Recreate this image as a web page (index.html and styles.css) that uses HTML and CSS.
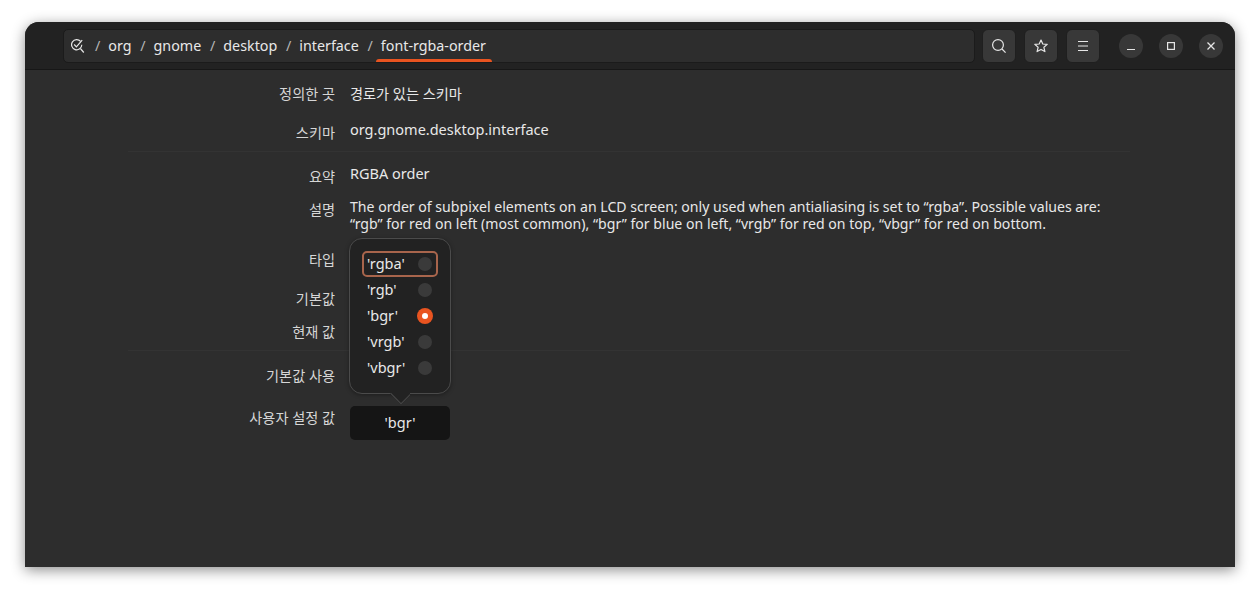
FILE: index.html
```html
<!DOCTYPE html>
<html lang="ko">
<head>
    <meta charset="utf-8" />
    <title>font-rgba-order</title>
    <link rel="stylesheet" href="styles.css">
</head>
<body>
    <div class="window">
        <header class="headerbar">
            <div class="pathbar">
                <svg class="path-icon" width="16" height="16" viewBox="0 0 16 16" fill="none" stroke="#e6e6e6" stroke-width="1.2">
                    <path d="M9.6 3.4A5.1 5.1 0 1 0 10.8 6.8"/>
                    <path d="M3.2 6.5l2.2 2.4 5.8-6.8"/>
                    <path d="M9.4 10.5l3.4 4"/>
                </svg>
                <span class="sep">/</span><span class="crumb">org</span>
                <span class="sep">/</span><span class="crumb">gnome</span>
                <span class="sep">/</span><span class="crumb">desktop</span>
                <span class="sep">/</span><span class="crumb">interface</span>
                <span class="sep">/</span><span class="crumb current">font-rgba-order</span>
            </div>
            <button class="toolbtn">
                <svg width="16" height="16" viewBox="0 0 16 16" fill="none" stroke="#e6e6e6" stroke-width="1.2"><circle cx="7" cy="7" r="5.4"/><path d="M11 11l3.6 3.6"/></svg>
            </button>
            <button class="toolbtn">
                <svg width="16" height="16" viewBox="0 0 16 16" fill="none" stroke="#e6e6e6" stroke-width="1.2" stroke-linejoin="round"><path d="M8 2l1.8 4 4.4.4-3.3 2.9 1 4.3L8 11.4l-3.9 2.2 1-4.3-3.3-2.9 4.4-.4z"/></svg>
            </button>
            <button class="toolbtn">
                <svg width="16" height="16" viewBox="0 0 16 16" stroke="#e6e6e6" stroke-width="1.2"><path d="M3 3.5h10M3 8h10M3 12.5h10"/></svg>
            </button>
            <div class="winbtns">
                <button class="winbtn"><svg width="12" height="12" viewBox="0 0 12 12" stroke="#e6e6e6" stroke-width="1.2"><path d="M2 9.5h8"/></svg></button>
                <button class="winbtn"><svg width="12" height="12" viewBox="0 0 12 12" fill="none" stroke="#e6e6e6" stroke-width="1.2"><rect x="2.6" y="2.6" width="6.8" height="6.8"/></svg></button>
                <button class="winbtn"><svg width="12" height="12" viewBox="0 0 12 12" stroke="#e6e6e6" stroke-width="1.3"><path d="M2.5 2.5l7 7M9.5 2.5l-7 7"/></svg></button>
            </div>
        </header>
        <main class="content">
            <div class="row r-defined"><span class="label">정의한 곳</span><span class="value">경로가 있는 스키마</span></div>
            <div class="row r-schema"><span class="label">스키마</span><span class="value">org.gnome.desktop.interface</span></div>
            <div class="row r-summary"><span class="label">요약</span><span class="value">RGBA order</span></div>
            <div class="row r-desc"><span class="label">설명</span><span class="value">The order of subpixel elements on an LCD screen; only used when antialiasing is set to “rgba”. Possible values are: “rgb” for red on left (most common), “bgr” for blue on left, “vrgb” for red on top, “vbgr” for red on bottom.</span></div>
            <div class="row r-type"><span class="label">타입</span></div>
            <div class="row r-default"><span class="label">기본값</span></div>
            <div class="row r-current"><span class="label">현재 값</span></div>
            <div class="row r-usedefault"><span class="label">기본값 사용</span></div>
            <div class="row r-custom"><span class="label">사용자 설정 값</span><div class="combo">'bgr'</div></div>

            <div class="popover">
                <div class="option focused"><span>'rgba'</span><i class="radio"></i></div>
                <div class="option"><span>'rgb'</span><i class="radio"></i></div>
                <div class="option"><span>'bgr'</span><i class="radio checked"></i></div>
                <div class="option"><span>'vrgb'</span><i class="radio"></i></div>
                <div class="option"><span>'vbgr'</span><i class="radio"></i></div>
                <div class="arrow"></div>
            </div>
        </main>
    </div>
</body>
</html>
```

FILE: styles.css
```css
*{
    box-sizing: border-box;
}
html, body{
    margin: 0;
    height: 100%;
    overflow: hidden;
}
body{
    background: #fff;
    padding: 22px 25px 28px;
    font-family: "Noto Sans", "Noto Sans CJK KR", sans-serif;
    font-size: 14.5px;
    color: #e8e8e8;
}
button{
    font: inherit;
    color: inherit;
    padding: 0;
    border: 0;
}
.window{
    height: 545px;
    background: #2d2d2d;
    border-radius: 14px 14px 0 0;
    box-shadow: 0 3px 14px rgba(0,0,0,.45);
    overflow: hidden;
    display: flex;
    flex-direction: column;
}
.headerbar{
    height: 48px;
    flex: none;
    background: #222;
    border-bottom: 1px solid #171717;
    padding: 7px 12px 0 38px;
    display: flex;
    align-items: flex-start;
}
.pathbar{
    width: 912px;
    height: 34px;
    background: #2d2d2d;
    border: 1px solid #1b1b1b;
    border-radius: 5px;
    padding: 0 0 2px 7px;
    display: flex;
    align-items: center;
    font-size: 14.3px;
    margin-right: 7px;
}
.path-icon{
    flex: none;
    margin: 2px 8px 0 0;
}
.sep{
    color: #b5b5b5;
    margin-right: 8px;
}
.crumb{
    margin-right: 8.7px;
    position: relative;
}
.current::after{
    content: "";
    position: absolute;
    left: -5px;
    right: -6px;
    bottom: -7px;
    height: 3px;
    border-radius: 3px 3px 0 0;
    background: #e95420;
}
.toolbtn{
    width: 34px;
    height: 34px;
    background: #383838;
    border: 1px solid #1f1f1f;
    border-radius: 6px;
    margin-right: 8px;
    display: flex;
    align-items: center;
    justify-content: center;
}
.winbtns{
    display: flex;
    gap: 16px;
    margin-left: 11px;
    padding-top: 5px;
}
.winbtn{
    width: 24px;
    height: 24px;
    border-radius: 50%;
    background: #383838;
    display: flex;
    align-items: center;
    justify-content: center;
}
.content{
    position: relative;
    flex: 1;
    margin: 0 105px 0 103px;
}
.row{
    display: grid;
    grid-template-columns: 207px 770px;
    column-gap: 15px;
    line-height: 17px;
}
.label{
    text-align: right;
    color: #d6d6d6;
    font-size: 14.2px;
}
.r-defined{
    padding-top: 15px;
    height: 45px;
}
.r-defined .value{
    font-size: 14.2px;
}
.r-schema{
    height: 37px;
    padding-top: 6px;
    border-bottom: 1px solid #333;
}
.r-schema .label, .r-summary .label, .r-custom .label, .r-desc .label{
    margin-top: 3px;
}
.r-summary{
    height: 37px;
    padding-top: 13px;
}
.r-desc{
    height: 52px;
    padding-top: 9px;
}
.r-desc .value{
    font-size: 14.1px;
}
.r-type{
    height: 39px;
    padding-top: 10px;
}
.r-default{
    height: 33px;
    padding-top: 10px;
}
.r-current{
    height: 38px;
    padding-top: 10px;
    border-bottom: 1px solid #333;
}
.r-usedefault{
    height: 37px;
    padding-top: 16px;
}
.r-custom{
    padding-top: 18px;
}
.combo{
    width: 100px;
    height: 34px;
    padding-bottom: 2px;
    background: #151515;
    border-radius: 5px;
    display: flex;
    align-items: center;
    justify-content: center;
}
.popover{
    position: absolute;
    left: 221px;
    top: 168px;
    width: 102px;
    height: 156px;
    background: #222;
    border: 1px solid #4b4b4b;
    border-radius: 13px;
    padding: 12px 12px;
    box-shadow: 0 1px 4px rgba(0,0,0,.35);
}
.option{
    height: 26px;
    display: flex;
    align-items: center;
    justify-content: space-between;
    padding: 0 5px;
}
.option span{
    padding-bottom: 3px;
}
.focused{
    outline: 2px solid #a8654c;
    outline-offset: -2px;
    border-radius: 5px;
}
.radio{
    width: 14px;
    height: 14px;
    border-radius: 50%;
    background: #3a3a3a;
    margin-right: 1px;
}
.radio.checked{
    width: 16px;
    height: 16px;
    margin-right: 0;
    background: #e95420;
    position: relative;
}
.radio.checked::after{
    content: "";
    position: absolute;
    left: 5px;
    top: 5px;
    width: 6px;
    height: 6px;
    border-radius: 50%;
    background: #fff;
}
.arrow{
    position: absolute;
    left: 40px;
    bottom: -11px;
    width: 20px;
    height: 11px;
    overflow: hidden;
}
.arrow::before{
    content: "";
    position: absolute;
    left: 3px;
    top: -8px;
    width: 14px;
    height: 14px;
    background: #222;
    border: 1px solid #4b4b4b;
    transform: rotate(45deg);
}
```
